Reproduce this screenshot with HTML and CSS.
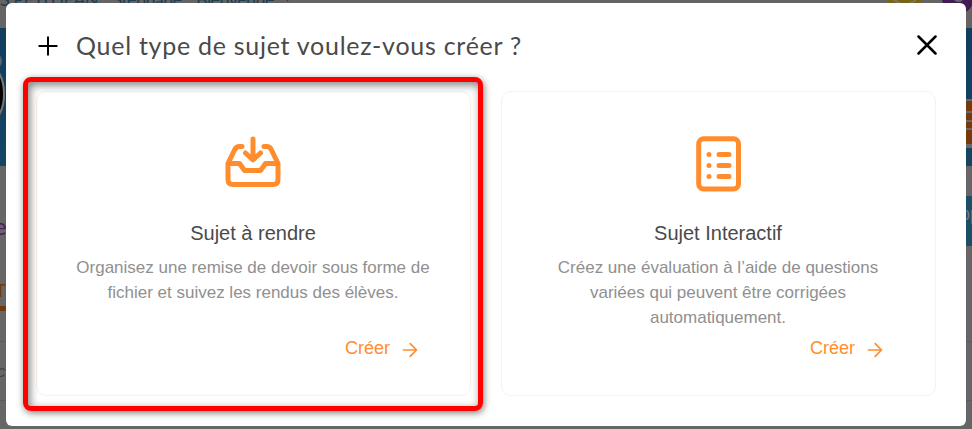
FILE: index.html
```html
<!DOCTYPE html>
<html lang="fr">
<head>
<meta charset="utf-8">
<title>Créer un sujet</title>
<link rel="stylesheet" href="styles.css">
</head>
<body>
<div class="page">
  <header class="topbar">
    <span class="welcome"><span>S PETITJEAN,</span><span>Stéphane,</span><span>Bienvenue</span><span>!</span></span>
    <span class="envelope"><svg width="34" height="12" viewBox="0 0 34 12"><path d="M6 0l11 6 11-6" fill="none" stroke="#777" stroke-width="1.5"/></svg></span>
    <span class="avatar"><i></i></span>
  </header>
  <section class="banner">
    <svg class="mascot" width="6" height="138" viewBox="0 0 6 138"><circle cx="-6" cy="33" r="8" fill="#57666e"/><ellipse cx="-12" cy="66" rx="16" ry="29" fill="#000" stroke="#777" stroke-width="2"/></svg>
    <div class="bricks"><i></i><i></i><i></i><i></i></div>
  </section>
  <div class="heading"><span class="heading-end">e</span><span class="action">pp</span></div>
  <div class="tab">T</div>
  <div class="row">c</div>
</div>

<main class="modal">
  <div class="modal-head">
    <svg class="plus" width="20" height="20" viewBox="0 0 20 20"><path d="M10 1.3v17.4M1.3 10h17.4"/></svg>
    <h1>Quel type de sujet voulez-vous créer ?</h1>
    <svg class="close" width="20" height="20" viewBox="0 0 20 20"><path d="M1.5 1.5l17 17M18.5 1.5l-17 17"/></svg>
  </div>
  <div class="cards">
    <article class="card selected">
      <svg class="icon" width="56" height="56" viewBox="0 0 56 56"><path d="M3 27.500h11.500l5 7h16l5-7h12.500M3 27.500v16q0 5 5 5h40q5 0 5-5v-16M3 27.500l6.500-13.500q1.500-3.500 5-3.500h2.500M53 27.500l-6.500-13.500q-1.500-3.500-5-3.500h-2.500M28 3v20M20.500 17L28 24l7.500-7"/></svg>
      <h2>Sujet à rendre</h2>
      <p>Organisez une remise de devoir sous forme de<br>fichier et suivez les rendus des élèves.</p>
      <a class="create">Créer <svg width="16" height="16" viewBox="0 0 16 16"><path d="M1.500 8h13M8.200 1.700L14.500 8l-6.300 6.300"/></svg></a>
    </article>
    <article class="card">
      <svg class="icon" width="56" height="56" viewBox="0 0 56 56"><rect x="8.700" y="2.700" width="39.800" height="50.300" rx="5"/><path d="M19 18.500h.01M19 29.500h.01M19 40.500h.01M29 18.500h10M29 29.500h10M29 40.500h10"/></svg>
      <h2>Sujet Interactif</h2>
      <p>Créez une évaluation à l’aide de questions<br>variées qui peuvent être corrigées<br>automatiquement.</p>
      <a class="create">Créer <svg width="16" height="16" viewBox="0 0 16 16"><path d="M1.500 8h13M8.200 1.700L14.500 8l-6.300 6.300"/></svg></a>
    </article>
  </div>
</main>
</body>
</html>
```
FILE: styles.css
```css
* { box-sizing: border-box; }
body { margin: 0; width: 972px; height: 429px; overflow: hidden; font-family: "Liberation Sans", Arial, sans-serif; background: #666; position: relative; }
.page { height: 429px; overflow: hidden; }
.topbar { height: 28px; display: flex; align-items: flex-start; background: #646464; }
.welcome { display: flex; gap: 11px; font: 18px/20px Lato, sans-serif; letter-spacing: -.6px; color: #1d3e55; margin-top: -11px; flex: 0 0 888px; white-space: nowrap; }
.envelope { width: 34px; height: 12px; background: #7a6414; }
.envelope svg { display: block; }
.avatar { width: 32px; height: 32px; margin: -18px -2px 0 20px; border-radius: 50%; background: #421d55; overflow: hidden; flex: none; display: flex; justify-content: center; }
.avatar i { width: 11px; height: 11px; margin-top: 9px; border-radius: 50%; background: #666; }
.banner { height: 138px; background: linear-gradient(#103e5c, #154563); display: flex; justify-content: space-between; }
.mascot { display: block; }
.bricks { width: 6px; height: 49px; margin-top: 71px; padding: 2px 0; background: #686868; display: grid; grid-template-rows: 10px 7px 6px 14px; gap: 2px; }
.bricks i { background: #743a0b; }
.heading { height: 110px; padding-top: 30px; display: flex; justify-content: space-between; }
.heading-end { width: 6px; font: 24px/60px Lato, sans-serif; color: #47205e; text-indent: -6px; }
.action { width: 6px; height: 50px; background: #1b4d64; color: #777; font-size: 18px; line-height: 36px; text-indent: -6px; overflow: hidden; }
.tab { height: 35px; width: 6px; border-bottom: 5px solid #743a0b; color: #743a0b; font-size: 18px; line-height: 30px; text-indent: -5px; }
.row { height: 60px; margin-top: 30px; border-top: 1px solid #5b5b5b; border-bottom: 1px solid #5b5b5b; color: #444; font: italic 17px/60px "Liberation Sans", sans-serif; text-indent: -3px; }

.modal { position: absolute; left: 6px; top: 3px; width: 960px; height: 423px; padding: 0 30px; border-radius: 6px; background: #fff; }
.modal-head { height: 88px; display: flex; align-items: center; padding: 0 0 5px 2px; }
.modal-head svg { fill: none; stroke: #000; stroke-linecap: round; }
.plus { stroke-width: 2; margin: 3px 0 0; }
.close { stroke-width: 2.500; margin: 0 -1px 0 auto; }
h1 { margin: 0 0 0 18px; font: 400 25px/32px Lato, sans-serif; letter-spacing: .73px; color: #4a4a4a; white-space: nowrap; }
.cards { display: grid; grid-template-columns: 435px 435px; gap: 30px; }
.card { height: 305px; border: 1px solid #fff0e5; border-radius: 10px; padding: 44px 52px 0 51px; display: flex; flex-direction: column; align-items: center; position: relative; }
.card.selected::after { content: ""; position: absolute; inset: -15px -13px -16px -14px; border: 5px solid #f00; border-radius: 8px; box-shadow: 1px 2px 7px rgba(0,0,0,.5), inset 2px 3px 8px rgba(0,0,0,.5); }
.icon { flex: none; fill: none; stroke: #ff8d2e; stroke-width: 5; stroke-linecap: round; stroke-linejoin: round; }
h2 { margin: 29px 0 0; font-size: 20px; line-height: 24px; font-weight: 400; color: #4a4a4a; white-space: nowrap; }
p { margin: 10px 0 0; font-size: 17px; line-height: 25px; color: #909090; text-align: center; white-space: nowrap; height: 75px; }
.create { align-self: flex-end; display: flex; align-items: center; gap: 12px; margin-top: 7px; font-size: 18px; line-height: 22px; color: #ff8d2e; }
.create svg { margin-top: 4px; fill: none; stroke: #ff8d2e; stroke-width: 1.700; stroke-linecap: round; stroke-linejoin: round; }
```
